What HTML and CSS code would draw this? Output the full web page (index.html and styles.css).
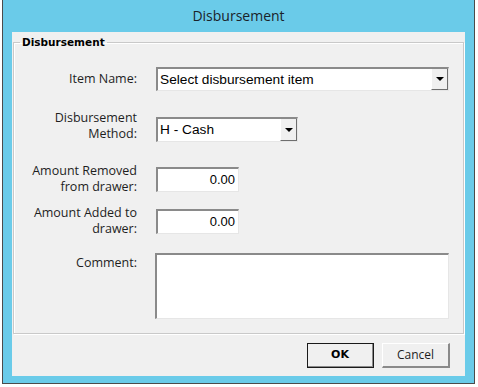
FILE: index.html
```html
<!DOCTYPE html>
<html lang="en">
<head>
  <meta charset="UTF-8" />
  <title>Disbursement</title>
  <link rel="stylesheet" href="styles.css">
</head>
<body>

  <!-- Dialog window -->
  <div class="window">
    <div class="titlebar">Disbursement</div>

    <div class="client">
      <fieldset class="group">
        <legend class="group-title">Disbursement</legend>

        <div class="row row-item">
          <div class="lbl">Item Name:</div>
          <div class="combo combo-wide">
            <span class="combo-text">Select disbursement item</span>
            <span class="combo-btn"><span class="arrow"></span></span>
          </div>
        </div>

        <div class="row row-method">
          <div class="lbl lbl-tight">Disbursement<br>Method:</div>
          <div class="combo combo-short">
            <span class="combo-text">H - Cash</span>
            <span class="combo-btn"><span class="arrow"></span></span>
          </div>
        </div>

        <div class="row row-removed">
          <div class="lbl lbl-two">Amount Removed<br>from drawer:</div>
          <div class="field amount">0.00</div>
        </div>

        <div class="row row-added">
          <div class="lbl lbl-two">Amount Added to<br>drawer:</div>
          <div class="field amount">0.00</div>
        </div>

        <div class="row row-comment">
          <div class="lbl lbl-comment">Comment:</div>
          <div class="field comment"></div>
        </div>
      </fieldset>

      <!-- OK / Cancel -->
      <div class="buttons">
        <div class="btn btn-default">OK</div>
        <div class="btn">Cancel</div>
      </div>
    </div>
  </div>

</body>
</html>
```

FILE: styles.css
```css
body {
  margin: 0;
  background-color: #fff;
  font-family: "Open Sans", sans-serif;
  color: #1e1e1e;
}

/* Window frame */
.window {
  margin-left: 2px;
  width: 473px;
  height: 384px;
  box-sizing: border-box;
  border: 1px solid #4b4b4b;
  border-top: 0;
  background-color: #6acbe9;
  padding: 0 9px 7px 9px;
  display: flex;
  flex-direction: column;
}

.titlebar {
  height: 32px;
  line-height: 32px;
  text-align: center;
  font-size: 14px;
  color: #1a2329;
}

.client {
  flex: 1;
  background-color: #f0f0f0;
  padding: 3px 1px 0 1px;
  display: flex;
  flex-direction: column;
}

/* Group box */
.group {
  flex: 1;
  margin: 0;
  padding: 18px 0 0 0;
  border: 1px solid #c9c9c9;
  box-shadow: inset 1px 1px 0 #fff, 1px 1px 0 #fff;
  min-width: 0;
}

.group-title {
  margin-left: 6px;
  padding: 0 2px;
  font-family: "DejaVu Sans", sans-serif;
  font-weight: bold;
  font-size: 10.5px;
  line-height: 14px;
  color: #000;
}

.row {
  display: flex;
  align-items: flex-start;
}

.row-method { margin-top: 26px; }
.row-removed { margin-top: 25px; }
.row-added { margin-top: 17px; }
.row-comment { margin-top: 19px; }

.lbl {
  width: 123px;
  margin-right: 19px;
  text-align: right;
  font-size: 12.5px;
  line-height: 24px;
}

.lbl-tight {
  line-height: 16px;
  margin-top: -7px;
  margin-bottom: -7px;
}

.lbl-two {
  line-height: 16px;
  margin-top: -4px;
  margin-bottom: -4px;
}

.lbl-comment {
  line-height: 16px;
  margin-top: 2px;
}

/* Sunken controls */
.combo,
.field {
  box-sizing: border-box;
  background-color: #fff;
  border-top: 2px solid #8a8a8a;
  border-left: 2px solid #8a8a8a;
  border-right: 1px solid #e6e6e6;
  border-bottom: 1px solid #e6e6e6;
  font-family: "Liberation Sans", sans-serif;
  font-size: 13.7px;
  color: #000;
}

.combo {
  display: flex;
  height: 24px;
}

.combo-wide { width: 293px; }
.combo-short { width: 142px; height: 25px; }

.combo-text {
  flex: 1;
  padding-left: 2px;
  line-height: 21px;
}

.combo-btn {
  width: 17px;
  display: flex;
  align-items: center;
  justify-content: center;
  background-color: #f0f0f0;
  border-right: 1px solid #6e6e6e;
  border-bottom: 1px solid #6e6e6e;
  border-left: 1px solid #fff;
  box-sizing: border-box;
}

.arrow {
  width: 0;
  height: 0;
  border-left: 4px solid transparent;
  border-right: 4px solid transparent;
  border-top: 4px solid #000;
}

.amount {
  width: 83px;
  height: 25px;
  text-align: right;
  padding-right: 3px;
  line-height: 21px;
  font-size: 13px;
}

.comment {
  width: 294px;
  height: 66px;
  margin-left: -1px;
}

/* Buttons */
.buttons {
  height: 42px;
  display: flex;
  justify-content: flex-end;
  gap: 8px;
  padding: 9px 14px 0 0;
  box-sizing: border-box;
}

.btn {
  width: 68px;
  height: 25px;
  box-sizing: border-box;
  background-color: #f0f0f0;
  border-top: 1px solid #fff;
  border-left: 1px solid #fff;
  border-right: 2px solid #8a8a8a;
  border-bottom: 2px solid #8a8a8a;
  text-align: center;
  font-size: 12px;
  line-height: 22px;
  color: #1e1e1e;
}

.btn-default {
  width: 67px;
  outline: 1px solid #1a1a1a;
  outline-offset: -1px;
  font-family: "DejaVu Sans", sans-serif;
  font-weight: bold;
  font-size: 11px;
  color: #000;
}
```
